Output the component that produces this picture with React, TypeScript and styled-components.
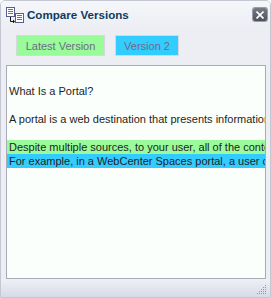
import styled, { createGlobalStyle } from "styled-components"

const GlobalStyle = createGlobalStyle`
  html, body {
    margin: 0;
    padding: 0;
    background: #ffffff;
  }
  body {
    font-family: "DejaVu Sans", "Liberation Sans", sans-serif;
  }
`

const Window = styled.div`
  box-sizing: border-box;
  width: 271px;
  height: 298px;
  display: flex;
  flex-direction: column;
  background: #eceef4;
  border: 1px solid #c4c7d2;
  border-radius: 5px 5px 0 0;
  overflow: hidden;
`

const TitleBar = styled.div`
  height: 27px;
  display: flex;
  align-items: center;
  padding: 0 3px 0 5px;
  background: linear-gradient(#f6f7fa, #eceef4);
`

const Title = styled.div`
  flex: 1;
  margin-left: 3px;
  font-family: "Liberation Sans", Arial, sans-serif;
  font-weight: bold;
  font-size: 11.6px;
  color: #0d3b5e;
`

const CloseButton = styled.div`
  width: 14px;
  height: 13px;
  display: flex;
  align-items: center;
  justify-content: center;
  border-radius: 2px;
  background: linear-gradient(#777b86, #4d515b);
  box-shadow: 0 0 0 1px #9a9ea8;
`

const ButtonRow = styled.div`
  display: flex;
  gap: 10px;
  padding: 7px 0 0 15px;
  height: 30px;
`

const VersionButton = styled.div<{ $bg: string; $w: number }>`
  box-sizing: border-box;
  width: ${(p) => p.$w}px;
  height: 21px;
  display: flex;
  align-items: center;
  justify-content: center;
  background: ${(p) => p.$bg};
  border: 1px solid #d6d8de;
  font-family: "Liberation Sans", Arial, sans-serif;
  font-size: 11px;
  color: #6b6d86;
`

const Content = styled.div`
  flex: 1;
  margin: 0 4px 0 5px;
  border: 1px solid #a9acb6;
  background: #fbfffb;
  padding-top: 4px;
  overflow: hidden;
  font-family: "Liberation Sans", Arial, sans-serif;
  font-size: 11px;
  line-height: 14px;
  color: #1e1e1e;
`

const Para = styled.div<{ $bg?: string; $gap?: boolean }>`
  margin-top: ${(p) => (p.$gap ? "14px" : "0")};
  padding-left: 2px;
  white-space: nowrap;
  overflow: hidden;
  background: ${(p) => p.$bg || "transparent"};
`

const Footer = styled.div`
  height: 16px;
  display: flex;
  justify-content: flex-end;
  align-items: flex-end;
  padding: 0 3px 2px 0;
  background: linear-gradient(#eef0f5, #d7dbe6);
`

const DocIcon = () => (
  <svg width="18" height="16" viewBox="0 0 18 16">
    <rect x="0.5" y="0.5" width="8" height="9" fill="#fff" stroke="#5a5f8a" />
    <path d="M2 2.5h5M2 4.5h5M2 6.5h5" stroke="#6a70a8" />
    <rect x="9.5" y="6.5" width="8" height="9" fill="#fff" stroke="#5a5f8a" />
    <path d="M11 8.5h5M11 10.5h5M11 12.5h5" stroke="#6a70a8" />
    <path d="M4.5 10v4.5h3" stroke="#111" fill="none" />
    <path d="M7 12.5l2 2-2 2z" fill="#111" />
  </svg>
)

const CloseIcon = () => (
  <svg width="8" height="8" viewBox="0 0 8 8">
    <path d="M0.5 0.5l7 7M7.5 0.5l-7 7" stroke="#fff" strokeWidth="1.6" />
  </svg>
)

const Grip = () => (
  <svg width="11" height="11" viewBox="0 0 11 11">
    {[
      [9, 1], [7, 3], [9, 3], [5, 5], [7, 5], [9, 5],
      [3, 7], [5, 7], [7, 7], [9, 7], [1, 9], [3, 9], [5, 9], [7, 9], [9, 9],
    ].map(([x, y]) => (
      <rect key={`${x}-${y}`} x={x} y={y} width="1" height="1" fill="#8f94a4" />
    ))}
  </svg>
)

const App = () => {
  return (
    <Window>
      <GlobalStyle />
      <TitleBar>
        <DocIcon />
        <Title>Compare Versions</Title>
        <CloseButton>
          <CloseIcon />
        </CloseButton>
      </TitleBar>
      <ButtonRow>
        <VersionButton $bg="#99fb99" $w={89}>Latest Version</VersionButton>
        <VersionButton $bg="#33ccff" $w={64}>Version 2</VersionButton>
      </ButtonRow>
      <Content>
        <Para $gap>What Is a Portal?</Para>
        <Para $gap>A portal is a web destination that presents information from diverse sources in a unified way.</Para>
        <Para $gap $bg="#99fb99">Despite multiple sources, to your user, all of the content appears in one place.</Para>
        <Para $bg="#33ccff">For example, in a WebCenter Spaces portal, a user can see everything at once.</Para>
      </Content>
      <Footer>
        <Grip />
      </Footer>
    </Window>
  )
}

export default App
